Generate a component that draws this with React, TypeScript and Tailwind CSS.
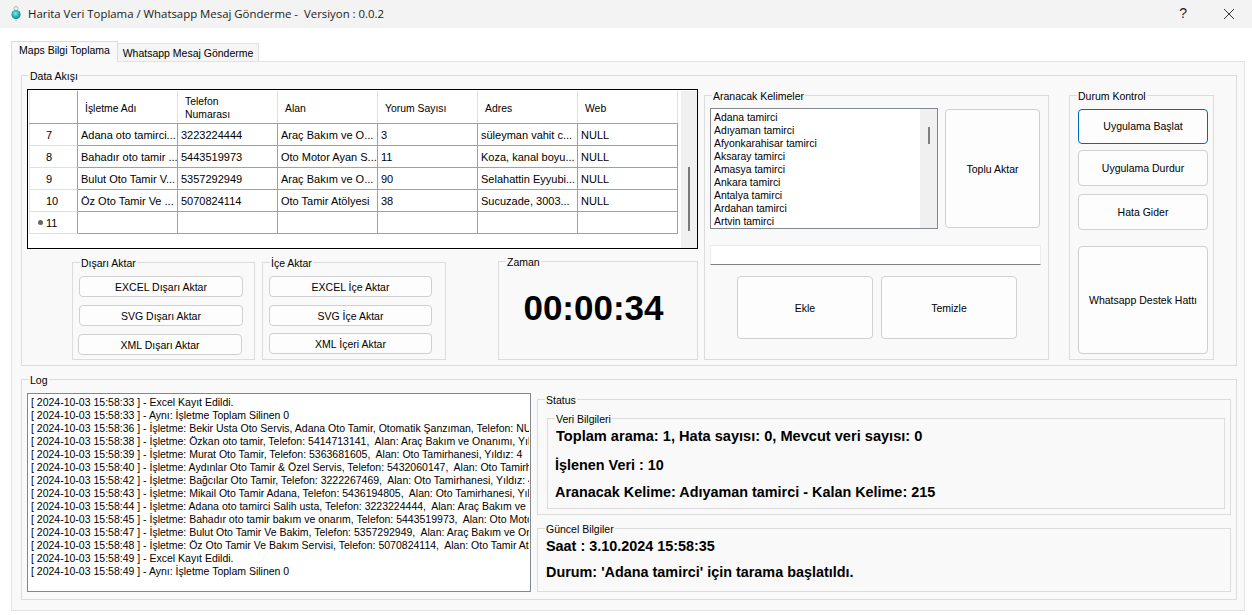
import React from 'react';

const rows = [
  ['7', 'Adana oto tamirci...', '3223224444', 'Araç Bakım ve O...', '3', 'süleyman vahit c...', 'NULL'],
  ['8', 'Bahadır oto tamir ...', '5443519973', 'Oto Motor Ayan S...', '11', 'Koza, kanal boyu...', 'NULL'],
  ['9', 'Bulut Oto Tamir V...', '5357292949', 'Araç Bakım ve O...', '90', 'Selahattin Eyyubi...', 'NULL'],
  ['10', 'Öz Oto Tamir Ve ...', '5070824114', 'Oto Tamir Atölyesi', '38', 'Sucuzade, 3003...', 'NULL'],
];

const headers = ['İşletme Adı', 'Telefon\nNumarası', 'Alan', 'Yorum Sayısı', 'Adres', 'Web'];

const keywords = [
  'Adana tamirci',
  'Adıyaman tamirci',
  'Afyonkarahisar tamirci',
  'Aksaray tamirci',
  'Amasya tamirci',
  'Ankara tamirci',
  'Antalya tamirci',
  'Ardahan tamirci',
  'Artvin tamirci',
];

const logLines = [
  '[ 2024-10-03 15:58:33 ] - Excel Kayıt Edildi.',
  '[ 2024-10-03 15:58:33 ] - Aynı: İşletme Toplam Silinen 0',
  '[ 2024-10-03 15:58:36 ] - İşletme: Bekir Usta Oto Servis, Adana Oto Tamir, Otomatik Şanzıman, Telefon: NULL,',
  '[ 2024-10-03 15:58:38 ] - İşletme: Özkan oto tamir, Telefon: 5414713141,  Alan: Araç Bakım ve Onanımı, Yıldız: 4',
  '[ 2024-10-03 15:58:39 ] - İşletme: Murat Oto Tamir, Telefon: 5363681605,  Alan: Oto Tamirhanesi, Yıldız: 4',
  '[ 2024-10-03 15:58:40 ] - İşletme: Aydınlar Oto Tamir & Özel Servis, Telefon: 5432060147,  Alan: Oto Tamirhanesi',
  '[ 2024-10-03 15:58:42 ] - İşletme: Bağcılar Oto Tamir, Telefon: 3222267469,  Alan: Oto Tamirhanesi, Yıldız: 4',
  '[ 2024-10-03 15:58:43 ] - İşletme: Mikail Oto Tamir Adana, Telefon: 5436194805,  Alan: Oto Tamirhanesi, Yıldız: 4',
  '[ 2024-10-03 15:58:44 ] - İşletme: Adana oto tamirci Salih usta, Telefon: 3223224444,  Alan: Araç Bakım ve Onarımı',
  '[ 2024-10-03 15:58:45 ] - İşletme: Bahadır oto tamir bakım ve onarım, Telefon: 5443519973,  Alan: Oto Motor Ayan',
  '[ 2024-10-03 15:58:47 ] - İşletme: Bulut Oto Tamir Ve Bakim, Telefon: 5357292949,  Alan: Araç Bakım ve Onarımı',
  '[ 2024-10-03 15:58:48 ] - İşletme: Öz Oto Tamir Ve Bakım Servisi, Telefon: 5070824114,  Alan: Oto Tamir Atölyesi',
  '[ 2024-10-03 15:58:49 ] - Excel Kayıt Edildi.',
  '[ 2024-10-03 15:58:49 ] - Aynı: İşletme Toplam Silinen 0',
];

const GroupBox = ({
  title,
  className = '',
  children,
}: {
  title: string;
  className?: string;
  children?: React.ReactNode;
}) => (
  <div className={`relative shrink-0 border border-[#dcdcdc] ${className}`}>
    <span className="absolute -top-[6px] left-[7px] bg-[#f9f9f9] px-[1px] text-[10.5px] font-normal leading-[13px] text-black">
      {title}
    </span>
    {children}
  </div>
);

const WinButton = ({
  label,
  className = '',
}: {
  label: string;
  className?: string;
}) => (
  <div
    className={`flex shrink-0 items-center justify-center rounded-[4px] border bg-[#fdfdfd] text-[10.5px] leading-[13px] text-black ${className}`}
  >
    {label}
  </div>
);

const DataTable = () => (
  <div className="flex h-[160px] w-[671px] border border-black bg-white pl-[1px] pt-[1px]">
    <div className="w-[649px] shrink-0">
      {/* header */}
      <div className="flex h-[33px] border-b border-[#a0a0a0]">
        <div className="w-[49px] border-x border-l-[#e8e8e8] border-r-[#a0a0a0]" />
        {headers.map((h) => (
          <div
            key={h}
            className="flex w-[100px] items-center whitespace-pre-line border-r border-[#e0e0e0] pl-[7px] pt-[2px] text-[10.4px] leading-[13px]"
          >
            {h}
          </div>
        ))}
      </div>
      {rows.map((row) => (
        <div key={row[0]} className="flex h-[22px]">
          <div className="flex w-[49px] items-center border-x border-b border-l-[#e8e8e8] border-r-[#a0a0a0] border-b-[#e0e0e0] pl-[16px] pt-[2px] text-[11px]">
            {row[0]}
          </div>
          {row.slice(1).map((cell, i) => (
            <div
              key={i}
              className="flex w-[100px] items-center overflow-hidden whitespace-nowrap border-r border-b border-[#a0a0a0] pl-[3px] pt-[2px] text-[11px]"
            >
              {cell}
            </div>
          ))}
        </div>
      ))}
      <div className="flex h-[22px]">
        <div className="relative flex w-[49px] items-center border-x border-b border-l-[#e8e8e8] border-r-[#a0a0a0] border-b-[#e0e0e0] pl-[16px] pt-[2px] text-[11px]">
          <span className="absolute left-[8px] top-[8px] h-[5px] w-[5px] rounded-full bg-[#666666]" />
          11
        </div>
        {[0, 1, 2, 3, 4, 5].map((i) => (
          <div key={i} className="w-[100px] border-r border-b border-[#a0a0a0]" />
        ))}
      </div>
    </div>
    <div className="ml-[3px] flex w-[16px] shrink-0 justify-center bg-[#f0f0f0]">
      <div className="mt-[76px] h-[64px] w-[2px] bg-[#7a7a7a]" />
    </div>
  </div>
);

export default function App() {
  return (
    <div className="relative h-[615px] w-[1252px] overflow-hidden bg-white font-['Liberation_Sans',Arial,sans-serif] text-black">
      {/* title bar */}
      <div className="flex h-[28px] items-center bg-[#f3f3f3]">
        <svg width="14" height="18" viewBox="0 0 14 18" className="ml-[9px]">
          <defs>
            <radialGradient id="orb" cx="45%" cy="40%" r="60%">
              <stop offset="0%" stopColor="#8fe6e6" />
              <stop offset="60%" stopColor="#22b3b8" />
              <stop offset="100%" stopColor="#0d7f88" />
            </radialGradient>
          </defs>
          <circle cx="7" cy="3.5" r="2" fill="none" stroke="#9aa5a8" strokeWidth="0.8" />
          <circle cx="7" cy="9.5" r="4.6" fill="url(#orb)" />
          <path d="M6 14.5 L8 14.5 L7 16.5 Z" fill="#b5c0c2" />
        </svg>
        <span className="ml-[5px] whitespace-pre text-[11.4px] font-['Open_Sans',sans-serif] text-[#1a1a1a]">
          Harita Veri Toplama / Whatsapp Mesaj Gönderme -  Versiyon : 0.0.2
        </span>
        <span className="ml-auto -mt-[2px] text-[14px] text-[#222222]">?</span>
        <svg width="10" height="10" viewBox="0 0 10 10" className="ml-[37px] mr-[18px]" fill="none" stroke="#333333">
          <path d="M0 0 L10 10 M10 0 L0 10" />
        </svg>
      </div>

      {/* tabs */}
      <div className="ml-[11px] mt-[13px] flex h-[20px] items-end">
        <div className="z-10 -mb-[1px] flex h-[21px] w-[107px] items-center justify-center border border-b-0 border-[#dcdcdc] bg-[#f9f9f9] pb-[3px] text-[10.5px]">
          Maps Bilgi Toplama
        </div>
        <div className="flex h-[18px] w-[141px] items-center justify-center border border-b-0 border-l-0 border-[#e0e0e0] bg-[#f5f5f5] pt-[2px] text-[10.5px]">
          Whatsapp Mesaj Gönderme
        </div>
      </div>

      {/* tab page */}
      <div className="ml-[11px] h-[550px] w-[1234px] border border-[#e3e3e3] bg-[#f9f9f9] pl-[9px] pt-[13px]">
        <GroupBox title="Data Akışı" className="flex h-[291px] w-[1216px] items-start">
          <div className="ml-[5px] mt-[13px] w-[671px] shrink-0">
            <DataTable />
            <div className="ml-[45px] mt-[13px] flex">
              <GroupBox title="Dışarı Aktar" className="h-[98px] w-[183px] pl-[6px] pt-[13px]">
                <div className="flex flex-col gap-[8px]">
                  <WinButton label="EXCEL Dışarı Aktar" className="h-[21px] w-[164px] border-[#d0d0d0] pt-[2px]" />
                  <WinButton label="SVG Dışarı Aktar" className="h-[21px] w-[164px] border-[#d0d0d0] pt-[2px]" />
                  <WinButton label="XML Dışarı Aktar" className="-ml-[1px] h-[21px] w-[164px] border-[#d0d0d0] pt-[2px]" />
                </div>
              </GroupBox>
              <GroupBox title="İçe Aktar" className="ml-[7px] h-[98px] w-[184px] pl-[6px] pt-[13px]">
                <div className="flex flex-col gap-[8px]">
                  <WinButton label="EXCEL İçe Aktar" className="h-[21px] w-[163px] border-[#d0d0d0] pt-[2px]" />
                  <WinButton label="SVG İçe Aktar" className="h-[21px] w-[163px] border-[#d0d0d0] pt-[2px]" />
                  <WinButton label="XML İçeri Aktar" className="-mt-[1px] h-[21px] w-[163px] border-[#d0d0d0] pt-[2px]" />
                </div>
              </GroupBox>
              <GroupBox title="Zaman" className="ml-[52px] -mt-[1px] flex h-[99px] w-[200px] items-center justify-center pb-[6px] pr-[9px]">
                <span className="text-[35px] font-bold leading-none">00:00:34</span>
              </GroupBox>
            </div>
          </div>

          <GroupBox title="Aranacak Kelimeler" className="ml-[6px] mt-[19px] h-[265px] w-[345px] pl-[5px] pt-[12px]">
            <div className="flex items-start">
              <div className="flex h-[121px] w-[228px] border border-[#828790] bg-white">
                <div className="flex-1 pl-[3px] pt-[2px] text-[10.4px] leading-[13px]">
                  {keywords.map((k) => (
                    <div key={k}>{k}</div>
                  ))}
                </div>
                <div className="flex w-[17px] justify-center bg-[#f0f0f0]">
                  <div className="mt-[18px] h-[17px] w-[2px] bg-[#808080]" />
                </div>
              </div>
              <WinButton label="Toplu Aktar" className="ml-[7px] mt-[1px] h-[119px] w-[95px] border-[#d0d0d0] pt-[2px]" />
            </div>
            <div className="mt-[16px] h-[20px] w-[331px] border border-[#ececec] border-b-[#808080] bg-white" />
            <div className="ml-[27px] mt-[11px] flex gap-[8px]">
              <WinButton label="Ekle" className="h-[63px] w-[136px] border-[#d0d0d0] pt-[2px]" />
              <WinButton label="Temizle" className="h-[63px] w-[136px] border-[#d0d0d0] pt-[2px]" />
            </div>
          </GroupBox>

          <GroupBox title="Durum Kontrol" className="ml-[20px] mt-[19px] h-[265px] w-[145px] pl-[8px] pt-[13px]">
            <WinButton label="Uygulama Başlat" className="h-[35px] w-[130px] border-[#0067c0]" />
            <WinButton label="Uygulama Durdur" className="mt-[6px] h-[36px] w-[130px] border-[#d0d0d0]" />
            <WinButton label="Hata Gider" className="mt-[8px] h-[36px] w-[130px] border-[#d0d0d0]" />
            <WinButton label="Whatsapp Destek Hattı" className="mt-[16px] h-[108px] w-[130px] border-[#d0d0d0]" />
          </GroupBox>
        </GroupBox>

        <GroupBox title="Log" className="mt-[13px] flex h-[221px] w-[1216px] items-start">
          <div className="ml-[5px] mt-[13px] h-[199px] w-[504px] shrink-0 overflow-hidden whitespace-pre border border-[#828790] bg-white pl-[3px] pr-[1px] pt-[2px] text-[10.5px] leading-[13px]">
            {logLines.map((line, i) => (
              <div key={i} className="overflow-hidden">{line}</div>
            ))}
          </div>
          <div className="ml-[6px] mt-[19px] w-[694px] shrink-0">
            <GroupBox title="Status" className="h-[116px] w-[694px] pl-[9px] pt-[18px]">
              <GroupBox title="Veri Bilgileri" className="h-[91px] w-[678px] text-[14.4px] font-bold">
                <div className="absolute left-[8px] top-[7px] whitespace-nowrap text-[14.6px]">Toplam arama: 1, Hata sayısı: 0, Mevcut veri sayısı: 0</div>
                <div className="absolute left-[7px] top-[36px] whitespace-nowrap">İşlenen Veri : 10</div>
                <div className="absolute left-[7px] top-[63px] whitespace-nowrap">Aranacak Kelime: Adıyaman tamirci - Kalan Kelime: 215</div>
              </GroupBox>
            </GroupBox>
            <GroupBox title="Güncel Bilgiler" className="mt-[13px] h-[64px] w-[694px] pl-[8px] pt-[9px] text-[14.4px] font-bold">
              <div className="whitespace-nowrap leading-[16px]">Saat : 3.10.2024 15:58:35</div>
              <div className="mt-[10px] whitespace-nowrap leading-[16px]">Durum: 'Adana tamirci' için tarama başlatıldı.</div>
            </GroupBox>
          </div>
        </GroupBox>
      </div>
    </div>
  );
}
